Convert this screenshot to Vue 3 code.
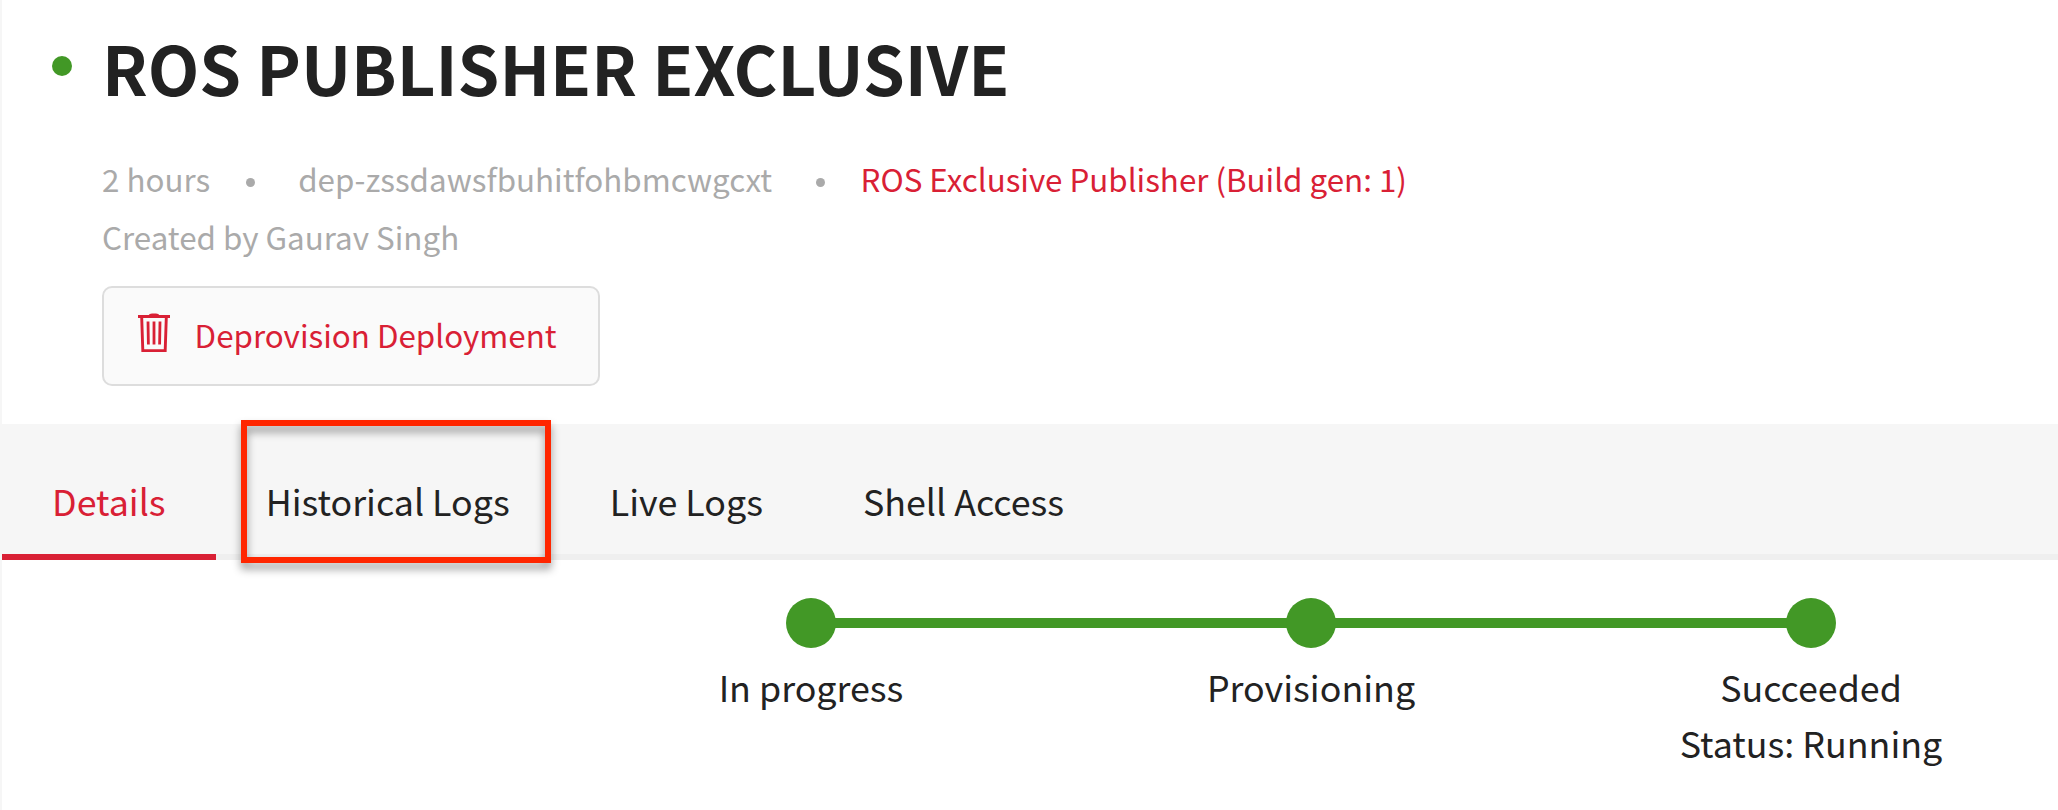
<script setup>
const tabs = [
  { label: 'Details', active: true },
  { label: 'Historical Logs', marked: true },
  { label: 'Live Logs' },
  { label: 'Shell Access' },
]
const steps = [
  { lines: ['In progress'] },
  { lines: ['Provisioning'] },
  { lines: ['Succeeded', 'Status: Running'] },
]
</script>

<template>
  <main class="page">
    <header class="head">
      <div class="title-row">
        <span class="status-dot"></span>
        <h1 class="title">ROS PUBLISHER EXCLUSIVE</h1>
      </div>
      <div class="meta">
        <span>2 hours</span>
        <i class="sep first"></i>
        <span>dep-zssdawsfbuhitfohbmcwgcxt</span>
        <i class="sep second"></i>
        <a class="link">ROS Exclusive Publisher (Build gen: 1)</a>
      </div>
      <div class="meta">Created by Gaurav Singh</div>
      <button class="deprovision" type="button">
        <svg class="trash" width="32" height="40" viewBox="0 0 32 40" fill="none" stroke="currentColor">
          <path d="M0 3.5H32" stroke-width="3" />
          <path d="M11.5 3C12 1.8 13 1.6 14 1.6H18C19 1.6 20 1.8 20.5 3" stroke-width="2.4" />
          <path d="M3.7 4.5L4.8 37.6H27.2L28.3 4.5" stroke-width="2.9" />
          <path d="M10 8.5L10.4 31.5M16 8.5V31.5M22 8.5L21.6 31.5" stroke-width="2.8" />
        </svg>
        <span>Deprovision Deployment</span>
      </button>
    </header>

    <nav class="tabs">
      <a v-for="tab in tabs" :key="tab.label" class="tab" :class="{ active: tab.active }">
        {{ tab.label }}
        <span v-if="tab.marked" class="marker"></span>
      </a>
    </nav>

    <ol class="steps">
      <li v-for="step in steps" :key="step.lines[0]" class="step">
        <span class="node"></span>
        <span v-for="line in step.lines" :key="line" class="step-line">{{ line }}</span>
      </li>
    </ol>
  </main>
</template>

<style>
body {
  background: #fff;
}
</style>

<style scoped>
.page {
  box-sizing: border-box;
  width: 2058px;
  height: 810px;
  overflow: hidden;
  border-left: 2px solid #f6f6f6;
  background: #fff;
  color: #222;
  font-family: "Noto Sans CJK SC", "Open Sans", sans-serif;
}
.head {
  box-sizing: border-box;
  height: 424px;
  padding: 17px 0 0 100px;
}
.title-row {
  display: flex;
  align-items: center;
  height: 100px;
  margin-left: -50px;
}
.status-dot {
  width: 20px;
  height: 20px;
  margin: -2px 30px 0 0;
  border-radius: 50%;
  background: #429826;
}
.title {
  margin: 0;
  font-size: 67px;
  line-height: 100px;
  font-weight: 700;
  white-space: nowrap;
}
.meta {
  display: flex;
  align-items: flex-start;
  height: 58px;
  font-size: 31.33px;
  line-height: 57px;
  color: #aaa;
  white-space: nowrap;
}
.title-row + .meta {
  margin-top: 33px;
}
.sep {
  align-self: center;
  width: 9px;
  height: 9px;
  border-radius: 50%;
  background: #aaa;
}
.first {
  margin: 7px 43.5px 0 35.5px;
}
.second {
  margin: 7px 36px 0 43.5px;
}
.link {
  color: #d92035;
}
.deprovision {
  display: flex;
  align-items: center;
  box-sizing: border-box;
  width: 498px;
  height: 100px;
  margin: 20px 0 0;
  padding: 0 0 3px 34px;
  border: 2px solid #ddd;
  border-radius: 10px;
  background: #fafafa;
  color: #d92035;
  font: inherit;
  font-size: 31.33px;
  line-height: 58px;
  white-space: nowrap;
}
.trash {
  margin: -3px 24.6px 0 0;
}
.tabs {
  display: flex;
  box-sizing: border-box;
  height: 136px;
  background: #f6f6f6;
  box-shadow: inset 0 -6px #efefef;
}
.tab {
  position: relative;
  box-sizing: border-box;
  height: 136px;
  padding: 47px 50px 0;
  font-size: 35.8px;
  line-height: 58px;
  white-space: nowrap;
}
.active {
  color: #d92035;
  border-bottom: 6px solid #d92035;
}
.marker {
  position: absolute;
  box-sizing: border-box;
  left: 25px;
  top: -4px;
  width: 310px;
  height: 143px;
  border: 6px solid #ff2600;
  filter: drop-shadow(0 6px 4px rgba(0, 0, 0, 0.4));
}
.steps {
  display: grid;
  grid-template-columns: repeat(3, 500px);
  margin: 38px 0 0 559px;
  padding: 0;
  list-style: none;
}
.step {
  position: relative;
  display: flex;
  flex-direction: column;
  align-items: center;
  font-size: 35.8px;
  line-height: 56px;
}
.step + .step::before {
  content: "";
  position: absolute;
  top: 20px;
  right: 50%;
  width: 100%;
  height: 10px;
  background: #429826;
}
.node {
  position: relative;
  width: 50px;
  height: 50px;
  margin-bottom: 10px;
  border-radius: 50%;
  background: #429826;
}
</style>
